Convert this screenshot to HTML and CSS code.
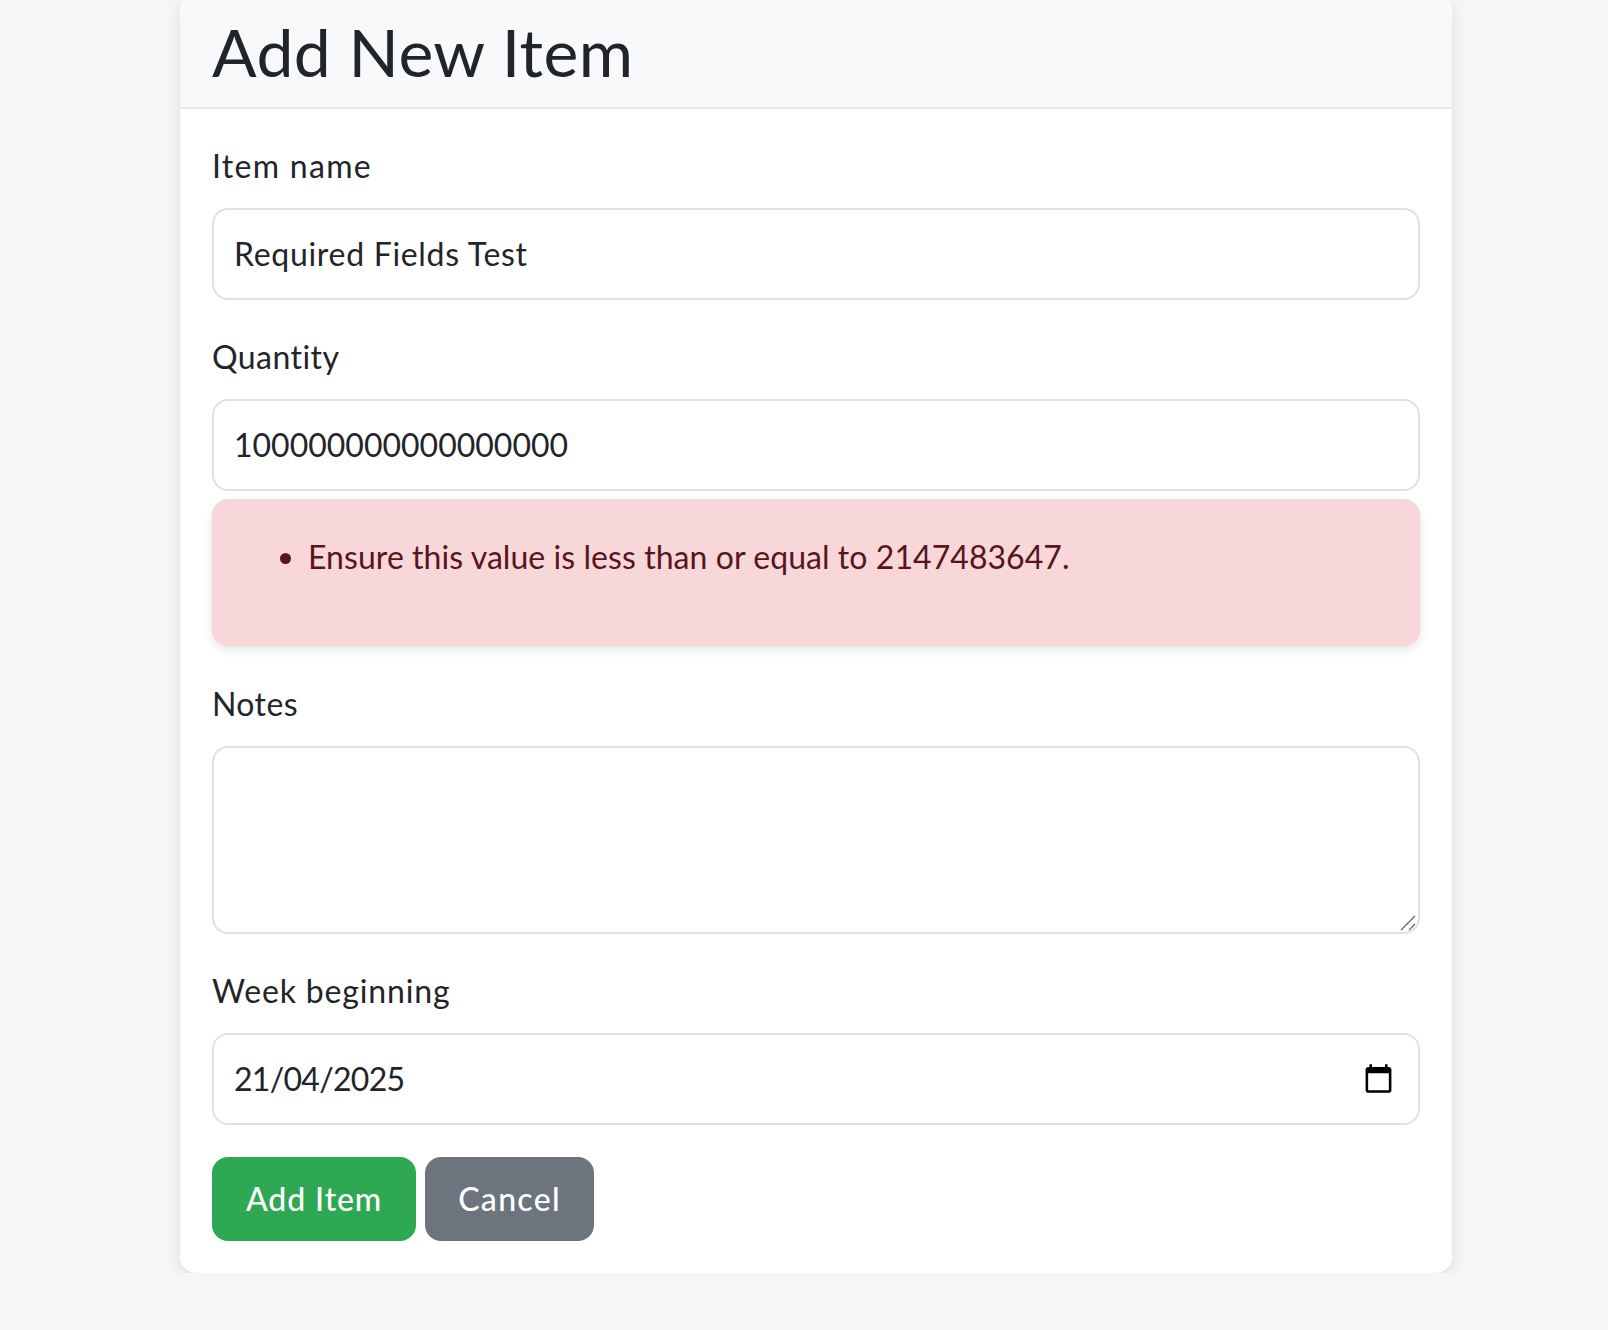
FILE: index.html
```html
<!DOCTYPE html>
<html lang="en">
<head>
<meta charset="utf-8">
<title>Add New Item</title>
<link rel="stylesheet" href="styles.css">
</head>
<body>
<main class="card">
  <header class="card-header"><h1>Add New Item</h1></header>
  <form class="card-body">
    <div class="group">
      <label class="label ls-name" for="name">Item name</label>
      <input class="control ls-req" id="name" type="text" value="Required Fields Test">
    </div>
    <div class="group">
      <label class="label ls-qty" for="qty">Quantity</label>
      <input class="control" id="qty" type="text" value="100000000000000000">
      <div class="alert"><ul><li>Ensure this value is less than or equal to 2147483647.</li></ul></div>
    </div>
    <div class="group">
      <label class="label ls-notes" for="notes">Notes</label>
      <div class="field">
        <textarea class="control area" id="notes"></textarea>
        <svg class="grip" viewBox="0 0 16 16" aria-hidden="true"><path d="M1 15 15 1M9 15l6-6" fill="none" stroke="#666" stroke-width="1.3"/></svg>
      </div>
    </div>
    <div class="group last">
      <label class="label ls-week" for="week">Week beginning</label>
      <div class="field">
        <input class="control ls-date" id="week" type="text" value="21/04/2025">
        <svg class="cal" viewBox="0 0 24 24" aria-hidden="true"><path d="M20 3h-1V1h-2v2H7V1H5v2H4c-1.100 0-2 .9-2 2v16c0 1.100.9 2 2 2h16c1.100 0 2-.9 2-2V5c0-1.100-.9-2-2-2zm0 18H4V8h16v13z"/></svg>
      </div>
    </div>
    <div class="actions">
      <button class="btn green" type="button">Add Item</button>
      <button class="btn gray" type="button">Cancel</button>
    </div>
  </form>
</main>
</body>
</html>
```

FILE: styles.css
```css
* { box-sizing: border-box; }
html, body { margin: 0; padding: 0; }
body {
  background: #f5f6f8;
  color: #212529;
  font-family: "Lato", "Open Sans", sans-serif;
  font-size: 32px;
  line-height: 48px;
}
.card {
  width: 1272px;
  margin: -6px 0 0 180px;
  background: #fff;
  border-radius: 16px;
  box-shadow: 0 4px 16px rgba(0, 0, 0, .1);
  overflow: hidden;
}
.card-header {
  height: 115px;
  padding: 2px 32px 0;
  background: #f8f9fa;
  border-bottom: 2px solid #e6e8ea;
  display: flex;
  align-items: center;
}
h1 { margin: 0; font-size: 66px; line-height: 106px; font-weight: 400; letter-spacing: .45px; }
.card-body { padding: 34px 32px 32px; }
.group { margin-bottom: 34px; }
.group.last { margin-bottom: 32px; }
.label { display: block; margin-bottom: 19px; line-height: 46px; font-weight: 400; }
.ls-name { letter-spacing: 1.3px; }
.ls-qty { letter-spacing: .45px; }
.ls-notes { letter-spacing: .4px; }
.ls-week { letter-spacing: .85px; }
.control {
  display: block;
  width: 100%;
  height: 92px;
  padding: 0 20px 1px;
  border: 2px solid #dee2e6;
  border-radius: 16px;
  background: #fff;
  color: #212529;
  font: 400 32px/48px "Lato", sans-serif;
  outline: 0;
}
.ls-req { letter-spacing: .7px; }
.ls-date { letter-spacing: -.7px; }
.area { height: 188px; resize: none; }
.field { position: relative; }
.grip { position: absolute; right: 4px; bottom: 3px; width: 16px; height: 16px; }
.cal { position: absolute; right: 26px; top: 30px; width: 31px; height: 31px; }
.alert {
  height: 147px;
  margin: 8px 0 35px;
  padding: 34px 38px;
  background: #f8d7da;
  color: #58151c;
  border-radius: 16px;
  box-shadow: 0 4px 10px rgba(0, 0, 0, .1);
  font-weight: 400;
  letter-spacing: .06px;
}
.alert ul { margin: 0; padding: 0 0 0 58px; }
.actions { display: flex; gap: 9px; }
.btn {
  height: 84px;
  padding: 0 34px;
  border: 0;
  border-radius: 16px;
  color: #fff;
  font: 500 32px/48px "Lato", sans-serif;
}
.green { background: #2ea853; letter-spacing: .9px; }
.gray { padding: 0 33px; background: #6c757d; letter-spacing: 1.3px; }
```
